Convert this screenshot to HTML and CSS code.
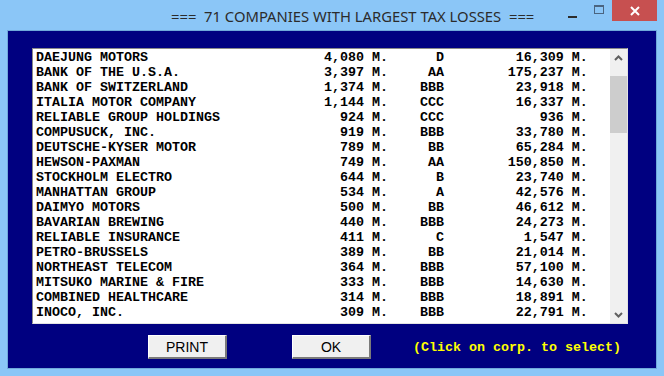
FILE: index.html
```html
<!DOCTYPE html>
<html lang="en">

<head>
    <meta charset="UTF-8">
    <title>71 Companies With Largest Tax Losses</title>
    <link rel="stylesheet" href="styles.css">
</head>

<body>
    <div class="window">
        <div class="titlebar">
            <div class="title">===  71 COMPANIES WITH LARGEST TAX LOSSES  ===</div>
            <div class="caption-buttons">
                <div class="cap-btn minimize"><span class="min-bar"></span></div>
                <div class="cap-btn maximize"><span class="max-box"></span></div>
                <div class="cap-btn close">
                    <svg width="10" height="10" viewBox="0 0 10 10">
                        <path d="M1 1 L9 9 M9 1 L1 9" stroke="#ffffff" stroke-width="2" fill="none" />
                    </svg>
                </div>
            </div>
        </div>

        <div class="client">
            <div class="listbox">
                <div class="rows">
                    <div class="row"><span>DAEJUNG MOTORS</span><span class="num">4,080 M.</span><span class="num">D</span><span class="num">16,309 M.</span></div>
                    <div class="row"><span>BANK OF THE U.S.A.</span><span class="num">3,397 M.</span><span class="num">AA</span><span class="num">175,237 M.</span></div>
                    <div class="row"><span>BANK OF SWITZERLAND</span><span class="num">1,374 M.</span><span class="num">BBB</span><span class="num">23,918 M.</span></div>
                    <div class="row"><span>ITALIA MOTOR COMPANY</span><span class="num">1,144 M.</span><span class="num">CCC</span><span class="num">16,337 M.</span></div>
                    <div class="row"><span>RELIABLE GROUP HOLDINGS</span><span class="num">924 M.</span><span class="num">CCC</span><span class="num">936 M.</span></div>
                    <div class="row"><span>COMPUSUCK, INC.</span><span class="num">919 M.</span><span class="num">BBB</span><span class="num">33,780 M.</span></div>
                    <div class="row"><span>DEUTSCHE-KYSER MOTOR</span><span class="num">789 M.</span><span class="num">BB</span><span class="num">65,284 M.</span></div>
                    <div class="row"><span>HEWSON-PAXMAN</span><span class="num">749 M.</span><span class="num">AA</span><span class="num">150,850 M.</span></div>
                    <div class="row"><span>STOCKHOLM ELECTRO</span><span class="num">644 M.</span><span class="num">B</span><span class="num">23,740 M.</span></div>
                    <div class="row"><span>MANHATTAN GROUP</span><span class="num">534 M.</span><span class="num">A</span><span class="num">42,576 M.</span></div>
                    <div class="row"><span>DAIMYO MOTORS</span><span class="num">500 M.</span><span class="num">BB</span><span class="num">46,612 M.</span></div>
                    <div class="row"><span>BAVARIAN BREWING</span><span class="num">440 M.</span><span class="num">BBB</span><span class="num">24,273 M.</span></div>
                    <div class="row"><span>RELIABLE INSURANCE</span><span class="num">411 M.</span><span class="num">C</span><span class="num">1,547 M.</span></div>
                    <div class="row"><span>PETRO-BRUSSELS</span><span class="num">389 M.</span><span class="num">BB</span><span class="num">21,014 M.</span></div>
                    <div class="row"><span>NORTHEAST TELECOM</span><span class="num">364 M.</span><span class="num">BBB</span><span class="num">57,100 M.</span></div>
                    <div class="row"><span>MITSUKO MARINE &amp; FIRE</span><span class="num">333 M.</span><span class="num">BBB</span><span class="num">14,630 M.</span></div>
                    <div class="row"><span>COMBINED HEALTHCARE</span><span class="num">314 M.</span><span class="num">BBB</span><span class="num">18,891 M.</span></div>
                    <div class="row"><span>INOCO, INC.</span><span class="num">309 M.</span><span class="num">BBB</span><span class="num">22,791 M.</span></div>
                </div>
                <div class="scrollbar">
                    <div class="arrow">
                        <svg width="9" height="6" viewBox="0 0 9 6">
                            <path d="M1 5 L4.5 1.5 L8 5" stroke="#606060" stroke-width="2" fill="none" />
                        </svg>
                    </div>
                    <div class="track"><div class="thumb"></div></div>
                    <div class="arrow">
                        <svg width="9" height="6" viewBox="0 0 9 6">
                            <path d="M1 1 L4.5 4.5 L8 1" stroke="#606060" stroke-width="2" fill="none" />
                        </svg>
                    </div>
                </div>
            </div>

            <div class="controls">
                <button type="button" class="btn print-btn">PRINT</button>
                <button type="button" class="btn ok-btn">OK</button>
                <span class="hint">(Click on corp. to select)</span>
            </div>
        </div>
    </div>
</body>

</html>
```

FILE: styles.css
```css
:root {
    --frame-color: #8bc6f7;
    --frame-line: #6fa8da;
    --navy: #000080;
    --face: #f0f0f0;
    --shadow: #7a7a7a;
    --yellow: #ffff00;
}

body {
    margin: 0;
    background: var(--frame-color);
    font-family: "Liberation Mono", monospace;
}

.window {
    width: 664px;
    height: 376px;
    display: flex;
    flex-direction: column;
    background: var(--frame-color);
}

.titlebar {
    height: 30px;
    display: flex;
    justify-content: space-between;
}

.title {
    padding: 7px 0 0 171px;
    font-family: "Noto Sans", sans-serif;
    font-size: 14.8px;
    line-height: 19px;
    color: #2b2b2b;
    white-space: pre;
}

.caption-buttons {
    display: flex;
    margin-right: 7px;
    height: 21px;
}

.cap-btn {
    display: flex;
    align-items: center;
    justify-content: center;
}

.minimize {
    width: 26px;
    align-items: flex-start;
}

.min-bar {
    width: 9px;
    height: 2px;
    margin-top: 16px;
    background: #2c2c2c;
}

.maximize {
    width: 27px;
}

.max-box {
    width: 8px;
    height: 6px;
    border: 1px solid #4a6480;
    border-top-width: 2px;
    margin-top: -2px;
}

.close {
    width: 45px;
    background: #c75050;
}

.client {
    margin: 0 7px;
    height: 337px;
    border: 1px solid var(--frame-line);
    background: var(--navy);
}

.listbox {
    display: flex;
    margin: 17px 0 0 24px;
    width: 594px;
    height: 274px;
    background: #ffffff;
    border: 1px solid;
    border-color: #8a8a8a #e3e3e3 #e3e3e3 #8a8a8a;
}

.rows {
    flex: 1;
    padding: 1px 0 0 3px;
    font-size: 13.333px;
    font-weight: bold;
    color: #000000;
}

.row {
    display: grid;
    grid-template-columns: 36ch 8ch 7ch 18ch;
    height: 15px;
    line-height: 15px;
    white-space: pre;
}

.num {
    text-align: right;
}

.scrollbar {
    width: 17px;
    display: flex;
    flex-direction: column;
    background: var(--face);
}

.arrow {
    height: 17px;
    display: flex;
    align-items: center;
    justify-content: center;
}

.track {
    flex: 1;
    padding-top: 10px;
}

.thumb {
    height: 57px;
    background: #cdcdcd;
}

.controls {
    display: flex;
    align-items: center;
    margin: 11px 0 0 140px;
}

.btn {
    width: 79px;
    height: 24px;
    padding: 0;
    background: var(--face);
    border-style: solid;
    border-width: 1px 2px 2px 1px;
    border-color: #ffffff var(--shadow) var(--shadow) #ffffff;
    font-family: "Liberation Sans", Arial, sans-serif;
    font-size: 14px;
    color: #000000;
}

.ok-btn {
    margin-left: 65px;
}

.hint {
    margin-left: 42px;
    font-size: 13.333px;
    font-weight: bold;
    color: var(--yellow);
    white-space: pre;
}
```
